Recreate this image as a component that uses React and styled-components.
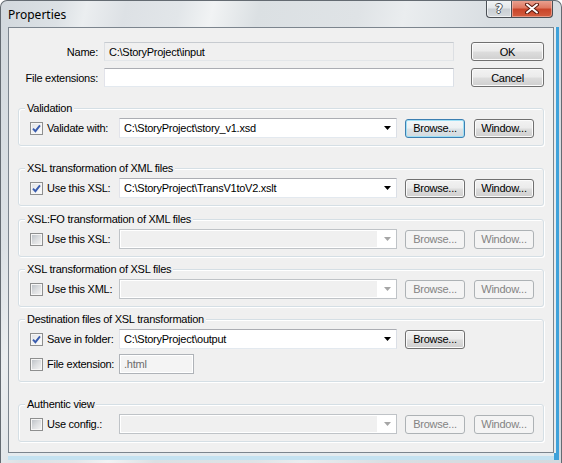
import React from 'react';
import styled, { createGlobalStyle, css } from 'styled-components';

const Global = createGlobalStyle`
  html, body { margin: 0; padding: 0; background: #ffffff; }
  body {
    width: 562px; height: 463px; overflow: hidden;
    font-family: "Liberation Sans", Arial, sans-serif;
    font-size: 11px; letter-spacing: -0.25px; color: #000;
  }
  * { box-sizing: border-box; }
`;

const Frame = styled.div`
  width: 562px;
  height: 463px;
  display: flex;
  flex-direction: column;
  padding: 0 7px 10px 7px;
  border: 1px solid #646b72;
  border-bottom: none;
  border-radius: 7px 7px 0 0;
  overflow: hidden;
  background: linear-gradient(
    103deg,
    #d2d8dd 0%, #dce1e5 9%, #ebeef0 13%, #dde1e5 19%, #e2e6e9 27%,
    #f1f3f4 32%, #dbe0e3 39%, #dfe3e6 54%, #eaedef 61%, #d9dee2 74%, #d4d9de 100%
  );
`;

const TitleBar = styled.div`
  height: 26px;
  flex: none;
  display: flex;
  align-items: flex-start;
`;

const TitleText = styled.div`
  font-family: "Noto Sans", "Open Sans", sans-serif;
  font-size: 12px;
  letter-spacing: 0;
  color: #000;
  padding: 5px 0 0 0;
  flex: 1;
`;

const CaptionButton = styled.div`
  height: 18px;
  margin-top: -1px;
  display: flex;
  align-items: center;
  justify-content: center;
  border: 1px solid #4a4f55;
  border-top: none;
  ${(p) => p.$kind === 'help' && css`
    width: 25px;
    border-right: none;
    border-radius: 0 0 0 4px;
    background: linear-gradient(#f3f5f6 0%, #e3e7ea 48%, #c9ced3 52%, #d6dade 100%);
    box-shadow: inset 0 0 0 1px rgba(255,255,255,0.6);
  `}
  ${(p) => p.$kind === 'close' && css`
    width: 42px;
    margin-right: 1px;
    border-radius: 0 0 4px 0;
    background: linear-gradient(#eaa595 0%, #df7a63 45%, #c9452a 55%, #d35e40 100%);
    box-shadow: inset 0 0 0 1px rgba(255,210,200,0.5);
  `}
`;

const HelpGlyph = styled.span`
  font-family: "DejaVu Sans", sans-serif;
  font-size: 12px;
  font-weight: bold;
  letter-spacing: 0;
  color: #fff;
  line-height: 1;
  text-shadow: -1px 0 #4d5257, 1px 0 #4d5257, 0 -1px #4d5257, 0 1px #4d5257;
`;

const Client = styled.div`
  flex: 1;
  background: #f0f0f0;
  border: 1px solid #7c858e;
  padding: 14px 9px 0 9px;
  display: flex;
  flex-direction: column;
  box-shadow: 2px 0 0 #e6ebee, 0 3px 0 #e4ebef, 5px 0 0 #3fa2da, 0 7px 0 #c4e2f1, 5px 7px 0 #3fa2da;
`;

const TopSection = styled.div`
  display: flex;
  align-items: flex-start;
`;

const FieldColumn = styled.div`
  display: flex;
  flex-direction: column;
  gap: 7px;
`;

const ButtonColumn = styled.div`
  display: flex;
  flex-direction: column;
  gap: 7px;
  margin-left: 17px;
`;

const FieldRow = styled.div`
  display: flex;
  align-items: center;
  height: 19px;
`;

const FieldLabel = styled.div`
  width: 80px;
  margin-right: 6px;
  text-align: right;
  white-space: nowrap;
`;

const TextField = styled.div`
  width: ${(p) => p.$w}px;
  height: ${(p) => p.$h || 19}px;
  display: flex;
  align-items: center;
  padding-left: 4px;
  white-space: nowrap;
  border: 1px solid;
  border-color: #abadb3 #dbdfe6 #e3e9ef #e2e3ea;
  background: #ffffff;
  ${(p) => p.$readonly && css`
    background: #f0f0f0;
    border-color: #c7cbd0 #dcdfe3 #e3e6e9 #dcdfe3;
  `}
  ${(p) => p.$disabled && css`
    background: #f4f4f4;
    color: #6d6d6d;
    border-color: #afb3b8;
    box-shadow: inset 0 0 0 1px #ffffff;
  `}
`;

const Button = styled.div`
  width: ${(p) => p.$w || 60}px;
  height: 19px;
  flex: none;
  display: flex;
  align-items: center;
  justify-content: center;
  border: 1px solid #707070;
  border-radius: 3px;
  background: linear-gradient(#f2f2f2 0%, #ebebeb 48%, #dddddd 52%, #cfcfcf 100%);
  box-shadow: inset 0 0 0 1px #fbfbfb;
  white-space: nowrap;
  ${(p) => p.$focused && css`
    border-color: #3c7fb1;
    box-shadow: inset 0 0 0 1px #9fe0f6;
    background: linear-gradient(#f3f6f8 0%, #ecf0f2 48%, #dde3e7 52%, #d3dade 100%);
  `}
  ${(p) => p.$disabled && css`
    border-color: #adb2b5;
    background: #f4f4f4;
    box-shadow: none;
    color: #838383;
  `}
`;

const Group = styled.div`
  position: relative;
  margin-top: ${(p) => p.$top}px;
  border: 1px solid #d5dfe5;
  border-radius: 3px;
  padding: 9px 11px 7px 11px;
  display: flex;
  flex-direction: column;
  gap: 5px;
  box-shadow: inset 1px 1px 0 #ffffff, 1px 1px 0 #ffffff;
`;

const Legend = styled.div`
  position: absolute;
  top: -7px;
  left: 6px;
  padding: 0 2px;
  line-height: 13px;
  background: #f0f0f0;
  white-space: nowrap;
`;

const Row = styled.div`
  display: flex;
  align-items: center;
  height: 20px;
`;

const CheckLabel = styled.div`
  width: 89px;
  flex: none;
  display: flex;
  align-items: center;
  gap: 4px;
  white-space: nowrap;
`;

const Box = styled.div`
  width: 13px;
  height: 13px;
  flex: none;
  border: 1px solid #8e8f8f;
  display: flex;
  align-items: center;
  justify-content: center;
  box-shadow: inset 0 0 0 1px #f6f6f6;
  background: ${(p) => p.$checked
    ? 'linear-gradient(135deg, #dfe1e4 0%, #f1f2f3 55%, #fdfdfd 100%)'
    : 'linear-gradient(135deg, #b8bdc3 0%, #dcdee0 50%, #f6f6f6 100%)'};
`;

const Combo = styled.div`
  width: 278px;
  height: 20px;
  flex: none;
  display: flex;
  align-items: center;
  padding-left: 4px;
  border: 1px solid;
  border-color: #abadb3 #dbdfe6 #e3e9ef #e2e3ea;
  background: #ffffff;
  white-space: nowrap;
  ${(p) => p.$disabled && css`
    border-color: #bfc3c7;
    background: linear-gradient(to right, #f0f0f0 calc(100% - 19px), #ffffff calc(100% - 19px));
    box-shadow: inset 0 0 0 1px #ffffff;
  `}
`;

const ComboText = styled.span`
  flex: 1;
`;

const Arrow = styled.svg`
  margin-right: 5px;
  flex: none;
`;

const Spacer = styled.div`
  width: ${(p) => p.$w}px;
  flex: none;
`;

function Checkbox({ checked }) {
  return (
    <Box $checked={checked}>
      {checked && (
        <svg width="9" height="9" viewBox="0 0 9 9">
          <path d="M1 4.6 L3.4 7.2 L8 1.4" fill="none" stroke="#3a5cae" strokeWidth="1.9" />
        </svg>
      )}
    </Box>
  );
}

function ComboBox({ value, disabled }) {
  return (
    <Combo $disabled={disabled}>
      <ComboText>{value}</ComboText>
      <Arrow width="7" height="4" viewBox="0 0 7 4">
        <polygon points="0,0 7,0 3.5,4" fill={disabled ? '#a6a6a6' : '#000'} />
      </Arrow>
    </Combo>
  );
}

function ComboGroup({ title, top, label, checked, value, disabled, focused }) {
  return (
    <Group $top={top}>
      <Legend>{title}</Legend>
      <Row>
        <CheckLabel>
          <Checkbox checked={checked} />
          <span>{label}</span>
        </CheckLabel>
        <ComboBox value={value} disabled={disabled} />
        <Spacer $w={8} />
        <Button $disabled={disabled} $focused={focused}>Browse...</Button>
        <Spacer $w={9} />
        <Button $disabled={disabled}>Window...</Button>
      </Row>
    </Group>
  );
}

export default function App() {
  return (
    <>
      <Global />
      <Frame>
        <TitleBar>
          <TitleText>Properties</TitleText>
          <CaptionButton $kind="help">
            <HelpGlyph>?</HelpGlyph>
          </CaptionButton>
          <CaptionButton $kind="close">
            <svg width="14" height="11" viewBox="0 0 14 11">
              <path d="M2 1.5 L12 9.5 M12 1.5 L2 9.5" stroke="#5b1b10" strokeWidth="4" strokeLinecap="round" />
              <path d="M2 1.5 L12 9.5 M12 1.5 L2 9.5" stroke="#ffffff" strokeWidth="2" strokeLinecap="round" />
            </svg>
          </CaptionButton>
        </TitleBar>
        <Client>
          <TopSection>
            <FieldColumn>
              <FieldRow>
                <FieldLabel>Name:</FieldLabel>
                <TextField $w={350} $readonly>C:\StoryProject\input</TextField>
              </FieldRow>
              <FieldRow>
                <FieldLabel>File extensions:</FieldLabel>
                <TextField $w={350} />
              </FieldRow>
            </FieldColumn>
            <ButtonColumn>
              <Button $w={73}>OK</Button>
              <Button $w={73}>Cancel</Button>
            </ButtonColumn>
          </TopSection>

          <ComboGroup title="Validation" top={21} label="Validate with:" checked
            value="C:\StoryProject\story_v1.xsd" focused />
          <ComboGroup title="XSL transformation of XML files" top={22} label="Use this XSL:" checked
            value="C:\StoryProject\TransV1toV2.xslt" />
          <ComboGroup title="XSL:FO transformation of XML files" top={13} label="Use this XSL:" disabled />
          <ComboGroup title="XSL transformation of XSL files" top={12} label="Use this XML:" disabled />

          <Group $top={12}>
            <Legend>Destination files of XSL transformation</Legend>
            <Row>
              <CheckLabel>
                <Checkbox checked />
                <span>Save in folder:</span>
              </CheckLabel>
              <ComboBox value="C:\StoryProject\output" />
              <Spacer $w={8} />
              <Button>Browse...</Button>
            </Row>
            <Row>
              <CheckLabel>
                <Checkbox />
                <span>File extension:</span>
              </CheckLabel>
              <TextField $w={75} $h={20} $disabled>.html</TextField>
            </Row>
          </Group>

          <ComboGroup title="Authentic view" top={22} label="Use config.:" disabled />
        </Client>
      </Frame>
    </>
  );
}
